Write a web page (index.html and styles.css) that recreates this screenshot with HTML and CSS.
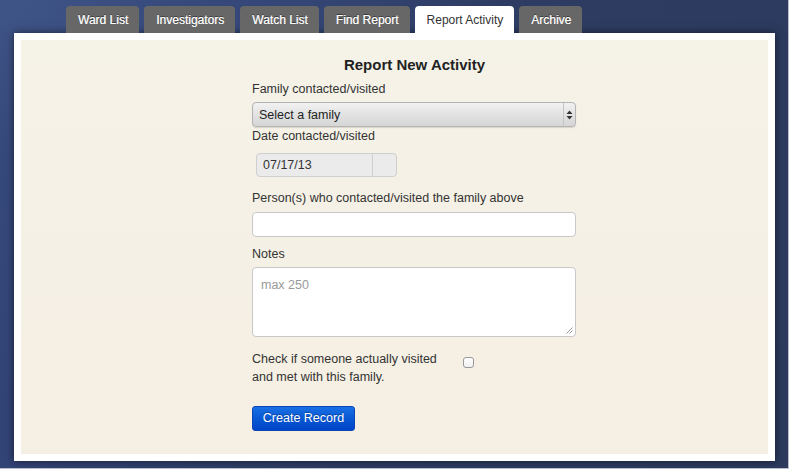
FILE: index.html
```html
<!DOCTYPE html>
<html>
<head>
<meta charset="utf-8">
<link rel="stylesheet" href="styles.css">
</head>
<body>
<div class="window">
  <nav class="tabs">
    <div class="tab">Ward List</div>
    <div class="tab">Investigators</div>
    <div class="tab">Watch List</div>
    <div class="tab">Find Report</div>
    <div class="tab active">Report Activity</div>
    <div class="tab">Archive</div>
  </nav>
  <div class="panel">
    <div class="inner">
      <h1 class="title">Report New Activity</h1>
      <form class="form">
        <label class="lbl lbl-first">Family contacted/visited</label>
        <div class="select">
          <span>Select a family</span>
          <span class="sel-arrows">
            <svg width="7" height="10" viewBox="0 0 7 10"><path d="M3.5 0.5 L6.5 4 L0.5 4 Z M3.5 9.5 L6.5 6 L0.5 6 Z" fill="#333"/></svg>
          </span>
        </div>
        <label class="lbl lbl-date">Date contacted/visited</label>
        <div class="date">
          <span class="date-val">07/17/13</span>
          <span class="date-btn"></span>
        </div>
        <label class="lbl lbl-person">Person(s) who contacted/visited the family above</label>
        <div class="input"></div>
        <label class="lbl lbl-notes">Notes</label>
        <div class="textarea">
          <span class="ph">max 250</span>
          <svg class="grip" width="7" height="7" viewBox="0 0 7 7"><path d="M6.5 0.5 L0.5 6.5 M6.5 3.5 L3.5 6.5" stroke="#999" stroke-width="1"/></svg>
        </div>
        <div class="check-row">
          <span class="check-text">Check if someone actually visited and met with this family.</span>
          <span class="checkbox"></span>
        </div>
        <div class="btn">Create Record</div>
      </form>
    </div>
  </div>
</div>
</body>
</html>
```
FILE: styles.css
```css
html, body {
  margin: 0;
  padding: 0;
}
body {
  font-family: "Liberation Sans", Arial, sans-serif;
  color: #333;
}
.window {
  width: 789px;
  height: 469px;
  box-sizing: border-box;
  padding-top: 6px;
  background: radial-gradient(ellipse 500px 400px at 0% 0%, #3f5487 0%, #36497b 40%, rgba(46,61,100,0) 100%), linear-gradient(100deg, #33457a 0%, #2e3d64 45%, #2c3a5e 100%);
  border-right: 1px solid #b9bfcb;
  border-bottom: 1px solid #b9bfcb;
  overflow: hidden;
}
.tabs {
  display: flex;
  gap: 5px;
  margin-left: 66px;
  height: 27px;
}
.tab {
  height: 27px;
  box-sizing: border-box;
  padding: 0 11px 0 12px;
  line-height: 29px;
  font-size: 12px;
  color: #fff;
  background: #676767;
  border-radius: 4px 4px 0 0;
  text-shadow: 0.3px 0 0 rgba(255,255,255,.6), 0 -1px 0 rgba(0,0,0,.45);
}
.tab.active {
  background: #fff;
  color: #333;
  text-shadow: none;
}
.panel {
  margin: 0 13px 0 14px;
  height: 428px;
  box-sizing: border-box;
  padding: 7px;
  background: #fff;
  box-shadow: 0 0 8px rgba(0,0,0,.55);
}
.inner {
  height: 100%;
  background: linear-gradient(180deg, #f5f2e7 0%, #f5f0e5 60%, #f6efe3 100%);
  padding-top: 15px;
  box-sizing: border-box;
}
.title {
  margin: 0;
  font-size: 15px;
  line-height: 20px;
  font-weight: bold;
  text-align: center;
  padding-left: 40px;
  color: #222;
}
.form {
  width: 324px;
  margin-left: 231px;
  font-size: 12.5px;
}
.lbl {
  display: block;
  line-height: 18px;
}
.lbl-first { margin-top: 5px; }
.lbl-date { margin-top: 0; }
.lbl-person { margin-top: 12px; }
.lbl-notes { margin-top: 8px; }
.select {
  margin-top: 4px;
  height: 25px;
  box-sizing: border-box;
  border: 1px solid #b4b4b4;
  border-radius: 4px;
  background: linear-gradient(180deg, #f2f2f2 0%, #e2e2e2 50%, #d6d6d6 100%);
  box-shadow: 0 1px 1px rgba(0,0,0,.12);
  display: flex;
  align-items: center;
  justify-content: space-between;
  padding-left: 6px;
  color: #222;
}
.sel-arrows {
  width: 11px;
  height: 23px;
  border-left: 1px solid #c4c4c4;
  display: flex;
  align-items: center;
  justify-content: center;
}
.date {
  margin: 8px 0 0 4px;
  width: 141px;
  height: 24px;
  box-sizing: border-box;
  border: 1px solid #cfcfcf;
  border-radius: 4px;
  background: #ebebeb;
  display: flex;
}
.date-val {
  flex: 1;
  line-height: 22px;
  padding-left: 6px;
  border-right: 1px solid #cfcfcf;
}
.date-btn {
  width: 23px;
}
.input {
  margin-top: 5px;
  height: 25px;
  box-sizing: border-box;
  border: 1px solid #c8c8c8;
  border-radius: 4px;
  background: #fff;
}
.textarea {
  margin-top: 4px;
  height: 70px;
  box-sizing: border-box;
  border: 1px solid #c8c8c8;
  border-radius: 4px;
  background: #fff;
  padding: 8px 8px;
  position: relative;
}
.ph {
  color: #999;
  line-height: 18px;
}
.grip {
  position: absolute;
  right: 2px;
  bottom: 2px;
}
.check-row {
  margin-top: 13px;
  display: flex;
  align-items: flex-start;
}
.check-text {
  width: 190px;
  line-height: 18px;
}
.checkbox {
  margin: 7px 0 0 21px;
  width: 11px;
  height: 11px;
  box-sizing: border-box;
  border: 1px solid #999;
  border-radius: 3px;
  background: linear-gradient(180deg, #fff, #f0f0f0);
}
.btn {
  margin-top: 20px;
  width: 103px;
  height: 25px;
  box-sizing: border-box;
  border: 1px solid #0a45b8;
  border-radius: 3px;
  background: linear-gradient(180deg, #1a70e4 0%, #0858d4 50%, #0044c8 100%);
  color: #fff;
  text-align: center;
  line-height: 23px;
  text-shadow: 0 -1px 0 rgba(0,0,0,.3);
}
```
